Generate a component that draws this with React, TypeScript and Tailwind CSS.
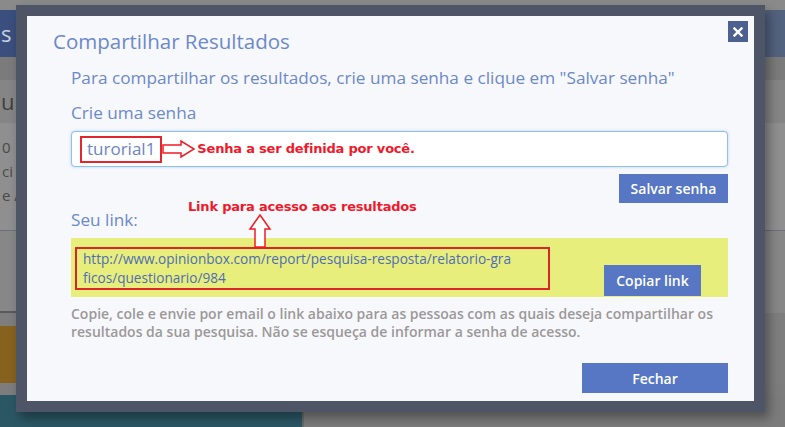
import React from 'react'

const font = { fontFamily: '"Open Sans", "Noto Sans", sans-serif' }
const redFont = { fontFamily: '"DejaVu Sans", sans-serif', letterSpacing: '-0.2px' }

function HollowRightArrow() {
  return (
    <svg width="34" height="18" viewBox="0 0 34 18" className="block">
      <path d="M1 5 H19 V1 L32 9 L19 17 V13 H1 Z" fill="#fff" stroke="#ee1c25" strokeWidth="1.5" strokeLinejoin="miter" />
    </svg>
  )
}

function HollowUpArrow() {
  return (
    <svg width="24" height="34" viewBox="0 0 24 34" className="block">
      <path d="M12 1 L22 15 H17 V33 H7 V15 H2 Z" fill="#fff" stroke="#ee1c25" strokeWidth="1.5" strokeLinejoin="miter" />
    </svg>
  )
}

export default function App() {
  return (
    <div className="relative w-[785px] h-[427px] overflow-hidden bg-[#808080]" style={font}>

      {/* page behind the overlay */}
      <div className="flex flex-col h-full">
        <div className="h-[10px] bg-[#8a8a8a]" />
        <div className="h-[47px] flex">
          <div className="w-[40px] bg-[#3a4f7e] text-[#c8d0e0] text-[22px] leading-[47px] pl-[1px]">s</div>
          <div className="flex-1 bg-[#4a5a7c]" />
          <div className="w-[40px] bg-[#53627f]" />
        </div>
        <div className="h-[23px] bg-[#7b7b7b]" />
        <div className="h-[43px] bg-[#858585] text-[#3e3e3e] text-[22px] leading-[43px] pl-[1px]">u</div>
        <div className="h-[107px] bg-[#8f8f8f] text-[#4a4a4a] text-[15px] leading-[24px] pt-[12px] pl-[2px]">
          <div>0</div>
          <div>ci</div>
          <div>e A</div>
        </div>
        <div className="h-[1px] bg-[#6b6f80]" />
        <div className="h-[80px] bg-[#878787]" />
        <div className="h-[2px] flex">
          <div className="w-[300px] bg-[#5a5a5a]" />
          <div className="flex-1 bg-[#878787]" />
        </div>
        <div className="h-[13px] bg-[#7e7e7e]" />
        <div className="h-[57px] flex">
          <div className="w-[300px] bg-[#87621f]" />
          <div className="flex-1 bg-[#7e7e7e]" />
        </div>
        <div className="h-[12px] bg-[#7d7d7d]" />
        <div className="flex-1 flex">
          <div className="w-[302px] bg-[#2b5764]" />
          <div className="w-[2px] bg-[#6a6a6a]" />
          <div className="flex-1 bg-[#7c7c7c]" />
        </div>
      </div>

      {/* modal */}
      <div className="absolute left-[16px] top-[5px] w-[749px] h-[407px] bg-[#4e5566] p-[11px] shadow-[4px_6px_10px_rgba(0,0,0,0.35)]">
        <div className="relative h-full bg-[#f7f8fc] pl-[26px] pr-[26px] pt-[10px]">

          <button className="absolute right-[6px] top-[5px] w-[20px] h-[21px] bg-[#4d6190] flex items-center justify-center">
            <svg width="10" height="10" viewBox="0 0 10 10">
              <path d="M1.5 1.5 L8.5 8.5 M8.5 1.5 L1.5 8.5" stroke="#fff" strokeWidth="2.4" strokeLinecap="square" />
            </svg>
          </button>

          <div className="text-[20.5px] leading-[30px] text-[#6c89c9]">Compartilhar Resultados</div>

          <div className="ml-[18px]">
            <div className="mt-[11px] text-[17.2px] leading-[22px] text-[#6c89c9]">
              Para compartilhar os resultados, crie uma senha e clique em "Salvar senha"
            </div>

            <div className="mt-[13px] text-[17.2px] leading-[22px] text-[#6c89c9]">Crie uma senha</div>

            {/* password input */}
            <div className="relative mt-[7px] h-[36px] bg-white border border-[#8fc0ea] rounded-[4px] shadow-[0_0_3px_rgba(120,170,230,0.5)] flex items-center pl-[8px]">
              <div className="h-[27px] border-2 border-[#e3262d] px-[5px] flex items-center text-[17px] text-[#6c84c4]">turorial1</div>
              <HollowRightArrow />
              <span className="ml-[1px] text-[13px] font-bold text-[#f0182a]" style={redFont}>
                Senha a ser definida por você.
              </span>
            </div>

            <div className="flex justify-end mt-[7px]">
              <button className="w-[109px] h-[29px] bg-[#5777c5] text-white text-[14px] font-semibold">Salvar senha</button>
            </div>

            {/* link label with annotation */}
            <div className="relative h-[35px]">
              <div className="absolute left-0 top-[6px] text-[17.2px] leading-[22px] text-[#6c89c9]">Seu link:</div>
              <div className="absolute left-[117px] top-[-6px] text-[13px] font-bold text-[#f0182a]" style={redFont}>
                Link para acesso aos resultados
              </div>
              <div className="absolute left-[177px] top-[11px] z-10">
                <HollowUpArrow />
              </div>
            </div>

            {/* yellow link box */}
            <div className="h-[59px] bg-[#e8ee7c] flex items-start pl-[4px] pt-[9px] pr-[27px]">
              <div className="w-[475px] h-[43px] border-2 border-[#d8262a] pl-[6px] text-[13.6px] leading-[19px] text-[#4d6db6]">
                http://www.opinionbox.com/report/pesquisa-resposta/relatorio-gra<br />ficos/questionario/984
              </div>
              <div className="flex-1" />
              <button className="mt-[18px] w-[97px] h-[31px] bg-[#5777c5] text-white text-[14px] font-semibold">Copiar link</button>
            </div>

            <div className="mt-[8px] text-[14px] leading-[18px] text-[#9c9898] font-semibold">
              Copie, cole e envie por email o link abaixo para as pessoas com as quais deseja compartilhar os resultados da sua pesquisa. Não se esqueça de informar a senha de acesso.
            </div>

            <div className="flex justify-end mt-[22px]">
              <button className="w-[146px] h-[30px] bg-[#5777c5] text-white text-[14px] font-semibold">Fechar</button>
            </div>
          </div>
        </div>
      </div>
    </div>
  )
}
